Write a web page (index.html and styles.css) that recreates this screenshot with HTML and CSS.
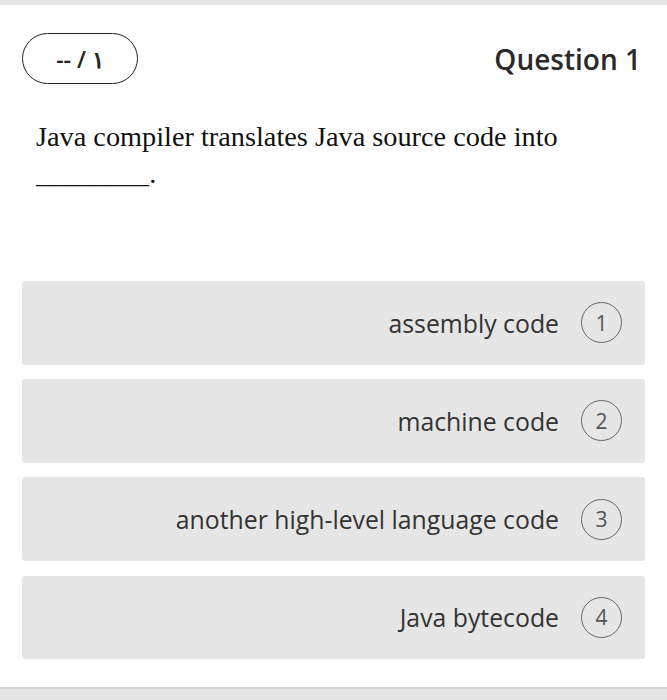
FILE: index.html
```html
<!DOCTYPE html>
<html>
<head>
<meta charset="utf-8">
<link rel="stylesheet" href="styles.css">
</head>
<body>
<div class="topbar"></div>
<div class="page">
  <div class="header">
    <div class="pill">-- / ١</div>
    <div class="qtitle">Question 1</div>
  </div>
  <div class="qtext">Java compiler translates Java source code into ________.</div>
  <div class="options">
    <div class="option"><span class="label">assembly code</span><span class="num">1</span></div>
    <div class="option"><span class="label">machine code</span><span class="num">2</span></div>
    <div class="option"><span class="label">another high-level language code</span><span class="num">3</span></div>
    <div class="option"><span class="label">Java bytecode</span><span class="num">4</span></div>
  </div>
</div>
<div class="bottombar"></div>
</body>
</html>
```
FILE: styles.css
```css
html, body {
  margin: 0;
  padding: 0;
  background: #fff;
}
body {
  width: 667px;
  height: 700px;
  overflow: hidden;
  display: flex;
  flex-direction: column;
  font-family: "Open Sans", sans-serif;
  color: #333;
}
.topbar {
  height: 5px;
  background: #e6e6e6;
  flex: none;
}
.page {
  flex: 1;
  padding: 28px 22px 0 22px;
}
.header {
  display: flex;
  justify-content: space-between;
  align-items: center;
  height: 51px;
}
.pill {
  box-sizing: border-box;
  width: 116px;
  height: 51px;
  border: 1.5px solid #222;
  border-radius: 26px;
  display: flex;
  align-items: center;
  justify-content: center;
  font-family: "Open Sans", sans-serif;
  font-weight: 600;
  font-size: 23px;
  color: #222;
}
.qtitle {
  font-size: 28px;
  font-weight: 600;
  color: #2a2a2a;
  margin-right: 4px;
}
.qtext {
  font-family: "Liberation Serif", serif;
  font-size: 28.3px;
  line-height: 37px;
  color: #111;
  margin: 34px 60px 0 14px;
  height: 163px;
}
.options {
  display: flex;
  flex-direction: column;
  gap: 14.7px;
}
.option {
  height: 83.5px;
  background: #e6e6e6;
  border-radius: 3px;
  display: flex;
  align-items: center;
  justify-content: flex-end;
  padding-right: 23px;
  gap: 22px;
}
.label {
  font-size: 24.8px;
  color: #333;
}
.num {
  box-sizing: border-box;
  width: 41px;
  height: 41px;
  border: 1.5px solid #666;
  border-radius: 50%;
  display: flex;
  align-items: center;
  justify-content: center;
  font-size: 21px;
  color: #555;
}
.bottombar {
  flex: none;
  height: 11px;
  background: #e6e6e6;
  border-top: 2px solid #d4d4d4;
}
```
